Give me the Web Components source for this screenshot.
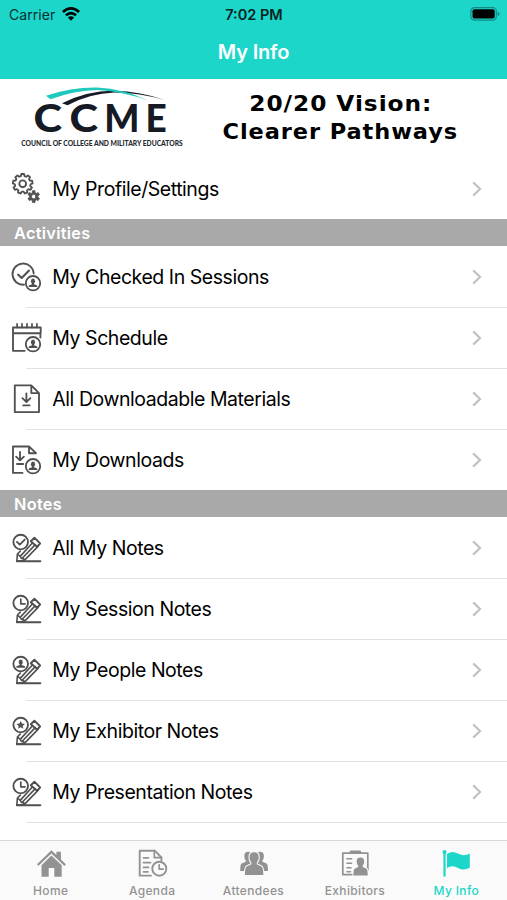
<!DOCTYPE html>
<html lang="en">
<head>
<meta charset="utf-8">
<title>My Info</title>
<style>
  html, body { margin: 0; height: 100%; }
  body {
    background: #fff;
    color: #000;
    font-family: Inter, "Liberation Sans", sans-serif;
    overflow: hidden;
  }
</style>
</head>
<body>
<info-app></info-app>

<script>
const TEAL = '#1cd6ca';

// Outline of a gear with rounded-off teeth
function gearPath(cx, cy, outer, inner, teeth) {
  const step = (Math.PI * 2) / teeth;
  const pts = [];
  for (let i = 0; i < teeth; i++) {
    const a = i * step - Math.PI / 2;
    [[-0.33, inner], [-0.2, outer], [0.2, outer], [0.33, inner]].forEach(([k, r]) => {
      pts.push(`${(cx + r * Math.cos(a + k * step)).toFixed(2)} ${(cy + r * Math.sin(a + k * step)).toFixed(2)}`);
    });
  }
  return `M${pts.join('L')}Z`;
}

// Small circled person, bottom right corner of several icons
const BADGE = `
  <circle cx="21" cy="21.2" r="7.2"/>
  <g fill="currentColor" stroke="none">
    <ellipse cx="21" cy="19.2" rx="2.1" ry="2.6"/>
    <path d="M20 20.5h2v1.7l2.8 1q.6.3.6 1.8h-8.8q0-1.5.6-1.8l2.8-1z"/>
  </g>`;

// Ring and pencil shared by all of the note icons
const PENCIL = `
  <circle cx="8.7" cy="9" r="7.3"/>
  <path d="M4.8 28.2H28.4"/>
  <path d="M4.8 28.2L5.4 21L8.2 23.4L9.3 25.2L11.6 25.6L12.6 27.4L4.8 28.2M5.4 21L8.3 18.1M8.2 23.4L20.6 9.8M12.4 27.4L26 13.4M10.2 25.2L23.3 11.6" stroke-width="1.6"/>
  <path d="M18.8 8.2L22.4 4.7L28.1 10.5L25 13.8Z" stroke-width="1.9"/>`;

const ICONS = {
  settings: `
    <path d="${gearPath(10.7, 9.8, 9.9, 7.9, 9)}"/>
    <circle cx="10.7" cy="9.8" r="3.4"/>
    <path fill="currentColor" fill-rule="evenodd" stroke-width=".8"
          d="${gearPath(21.7, 22.6, 6, 4.2, 6)}M24 22.6a2.3 2.3 0 1 0-4.6 0a2.3 2.3 0 1 0 4.6 0Z"/>`,
  checked: `
    <path d="M12 22.7A10.6 10.6 0 1 1 21.7 11.5"/>
    <path d="M6.2 12.7l3.5 3.3 7.3-7.4" stroke-width="2.1"/>${BADGE}`,
  schedule: `
    <path d="M1 4.5H28.7V10.2H1ZM1 10.2V27.8H12.7M28.4 10V14.5"/>
    <path d="M5.1 .8V4.5M10 .8V4.5M15 .8V4.5M20 .8V4.5M24.9 .8V4.5" stroke-width="1.7"/>${BADGE}`,
  download: `
    <path d="M2.8 1.4H19.3L27 9.1V28.1H2.8ZM19.3 1.4V9.1H27"/>
    <path d="M14.4 9.3V17.6M10.4 14.2l4 3.8 4-3.8M11.2 21.4h6.4"/>`,
  downloads: `
    <path d="M10.5 27.9H1V1.5H17L24 8.2H17V1.5"/>
    <path d="M8 6.8V15M4.1 11.7l3.9 3.7 3.9-3.7M5 19h6.2"/>${BADGE}`,
  noteCheck: `${PENCIL}<path d="M4.9 8.9l2.9 2.8 4.9-5.1"/>`,
  noteClock: `${PENCIL}<path d="M8.8 5.2V9.8H13" stroke-width="1.7"/>`,
  notePerson: `${PENCIL}
    <g fill="currentColor" stroke="none">
      <ellipse cx="8.7" cy="7" rx="2.1" ry="2.6"/>
      <path d="M7.7 8.5h2v1.6l2.8 1q.6.3.6 1.7H4.3q0-1.4.6-1.7l2.8-1z"/>
    </g>`,
  noteStar: `${PENCIL}
    <path d="M8.7 4.9l1.3 2.7 3 .3-2.3 2 .7 2.9-2.7-1.5L6 12.8l.7-2.9-2.3-2 3-.3z" fill="currentColor" stroke="none"/>`,

  home: `
    <g fill="currentColor" stroke="none">
      <path d="M1 15.2L15.4 1.2l5 4.8V2.8h4.5v7.7l5 4.8-1.5 1.6L15.4 4.4 2.5 16.8z"/>
      <path d="M5.5 16.2l9.9-9.6 10.3 9.6v11.6h-7.4v-8.7h-5.6v8.7H5.5z"/>
    </g>`,
  agenda: `
    <path d="M14 26.6H2.7V1.7H17.8L24.4 8.5V11.3" stroke-width="1.9"/>
    <path d="M17.3 1.7V8.6H24.4M6.5 8.8h5M6.5 13.7h7M6.5 18.4h5M6.5 22.8h4.5" stroke-width="1.7"/>
    <circle cx="22.3" cy="19.7" r="7" stroke-width="1.9"/>
    <path d="M22.2 15.8v4.3h4" stroke-width="1.7"/>`,
  attendees: `
    <g fill="currentColor" stroke="none">
      <path d="M9.3 2.8q4 0 4 4.4 0 2.5-1.6 4.2v1.5l4 2V22H1.2q0-6.8 1.4-7.5l4.2-1.8v-1.3Q5.3 9.7 5.3 7.2q0-4.4 4-4.4z"/>
      <path d="M20.9 2.8q4 0 4 4.4 0 2.5-1.5 4.2v1.3l4.2 1.8q1.4.7 1.4 7.5H14.5v-7.1l4-2v-1.5q-1.6-1.7-1.6-4.2 0-4.4 4-4.4z"/>
    </g>
    <path d="M15.1 3.2q4.6 0 4.6 5.2 0 3-1.9 5v1.9l4.6 2.2q1.9.8 1.9 8.6H5.9q0-7.8 1.9-8.6l4.6-2.2v-1.9q-1.9-2-1.9-5 0-5.2 4.6-5.2z"
          fill="currentColor" stroke="#fafafa" stroke-width="2.2" paint-order="stroke"/>`,
  exhibitors: `
    <path d="M13.5 25.7H2.8V4.1H27.8V21" stroke-width="1.7"/>
    <path d="M11 3h8.8" stroke-width="3"/>
    <path d="M7 9.8h4.6M7 14.3h4.6M7 18.7h4M7 22.8h3.4" stroke-width="1.6"/>
    <path d="M20.4 8.4q3.8 0 3.8 4.2 0 2.3-1.5 3.9v1.6l3.8 1.6q1.2.7 1.2 6.8H13.4q0-6.1 1.2-6.8l3.6-1.6v-1.6q-1.6-1.6-1.6-3.9 0-4.2 3.8-4.2z" fill="currentColor" stroke="#fafafa" stroke-width="2" paint-order="stroke"/>`,
  flag: `
    <g fill="currentColor" stroke="none">
      <circle cx="3.5" cy="3" r="2"/>
      <rect x="2.4" y="3" width="2.2" height="24.8" rx="1"/>
      <path d="M6 5Q11 1.2 17 4.5T28.8 4.4V18.8Q22.5 22 17 18.9T6 19z"/>
    </g>`
};

class GlyphIcon extends HTMLElement {
  connectedCallback() {
    this.attachShadow({ mode: 'open' }).innerHTML = `
      <style>
        :host { display: block; width: 30px; height: 30px; flex: none; }
        svg { display: block; overflow: visible; }
      </style>
      <svg width="30" height="30" viewBox="0 0 30 30" fill="none" stroke="currentColor"
           stroke-width="1.85" stroke-linejoin="round" stroke-linecap="round">${ICONS[this.getAttribute('name')]}</svg>
    `;
  }
}

class StatusBar extends HTMLElement {
  connectedCallback() {
    this.attachShadow({ mode: 'open' }).innerHTML = `
      <style>
        :host {
          display: grid; grid-template-columns: 1fr auto 1fr; align-items: center;
          height: 28px; padding: 0 7px 0 9px; box-sizing: border-box;
          font-size: 14px; color: #03302d;
        }
        .left { display: flex; align-items: center; gap: 7px; }
        .carrier { letter-spacing: .05px; }
        .time { font-weight: 600; font-size: 14.5px; letter-spacing: 0; margin-left: -1px; color: #05221f; }
        .battery { justify-self: end; }
        svg { display: block; }
      </style>
      <div class="left">
        <span class="carrier">Carrier</span>
        <svg width="18" height="14" viewBox="0 0 18 14" fill="none" stroke="#000" stroke-width="2.6">
          <path d="M.9 5Q9-2.2 17.1 5"/>
          <path d="M3.9 8.3Q9 3.9 14.1 8.3"/>
          <path d="M9 13.7L5.9 10.6Q9 8 12.1 10.6Z" fill="#000" stroke="none"/>
        </svg>
      </div>
      <span class="time">7:02 PM</span>
      <svg class="battery" width="30" height="14" viewBox="0 0 30 14">
        <rect x=".9" y=".7" width="25.4" height="12.4" rx="3.6" fill="none" stroke="#128a82" stroke-width="1.2"/>
        <rect x="2.5" y="2.3" width="22.2" height="9.2" rx="2" fill="#000"/>
        <path d="M27.7 4.7q2 .7 2 2.2t-2 2.2z" fill="#128a82"/>
      </svg>
    `;
  }
}

class NavHeader extends HTMLElement {
  connectedCallback() {
    this.attachShadow({ mode: 'open' }).innerHTML = `
      <style>
        :host { display: block; height: 79px; background: ${TEAL}; flex: none; }
        h1 {
          margin: 0; height: 49px; line-height: 49px; text-align: center;
          font-size: 20px; font-weight: 600; letter-spacing: -.2px; color: #fff;
        }
      </style>
      <status-bar></status-bar>
      <h1><slot></slot></h1>
    `;
  }
}

class EventBanner extends HTMLElement {
  connectedCallback() {
    this.attachShadow({ mode: 'open' }).innerHTML = `
      <style>
        :host { display: block; height: 79px; flex: none; background: #fff; }
        svg { display: block; }
        .mark { font: 900 37px Lato, sans-serif; fill: #151a24; }
        .tag { font: 900 6.9px Lato, sans-serif; fill: #252932; }
        .title { font: bold 22px "DejaVu Sans", sans-serif; letter-spacing: .9px; fill: #000; }
      </style>
      <svg width="507" height="79" viewBox="0 79 507 79">
        <path d="M62 103.2Q88 90.5 114 90.8Q141 91.5 164.5 100Q140 93 114 92.6Q90 93.5 67.5 105.3Z" fill="#151a24"/>
        <path d="M46 95.8Q72 87.2 97 87.6Q124 89 148.5 100.8Q124 91.5 98 90Q74 90.5 50.5 99.2Z" fill="#1fc9bd"/>
        <text class="mark" y="131.7"><tspan x="33.5" textLength="28.5" lengthAdjust="spacingAndGlyphs">C</tspan><tspan x="69.5" textLength="28.5" lengthAdjust="spacingAndGlyphs">C</tspan><tspan x="104.2">M</tspan><tspan x="145.6">E</tspan></text>
        <text class="tag" x="21.3" y="145.6" textLength="161.5" lengthAdjust="spacingAndGlyphs">COUNCIL OF COLLEGE AND MILITARY EDUCATORS</text>
        <text class="title" x="249.3" y="111.2" textLength="183" lengthAdjust="spacingAndGlyphs">20/20 Vision:</text>
        <text class="title" x="222.6" y="139" textLength="235.5" lengthAdjust="spacingAndGlyphs">Clearer Pathways</text>
      </svg>
    `;
  }
}

class SectionHeader extends HTMLElement {
  connectedCallback() {
    this.attachShadow({ mode: 'open' }).innerHTML = `
      <style>
        :host {
          display: flex; align-items: center; height: 27px; padding-left: 14px; flex: none;
          background: #a9a9a9; color: #fff; font-size: 16.3px; font-weight: 600; letter-spacing: .3px;
        }
      </style>
      <slot></slot>
    `;
  }
}

class MenuRow extends HTMLElement {
  connectedCallback() {
    this.attachShadow({ mode: 'open' }).innerHTML = `
      <style>
        :host {
          display: flex; align-items: center; position: relative; flex: none;
          height: 61.1px; padding: 0 25px 0 12px; box-sizing: border-box;
        }
        :host(:not([last]))::after {
          content: ""; position: absolute; left: 26px; right: 0; bottom: -.5px; height: 1px; background: #e2e2e2;
        }
        glyph-icon { color: #505050; }
        .label { flex: 1; margin-left: 10.3px; font-size: 19.5px; letter-spacing: -.45px; white-space: nowrap; }
        svg { display: block; }
      </style>
      <glyph-icon name="${this.getAttribute('icon')}"></glyph-icon>
      <span class="label"><slot></slot></span>
      <svg width="10" height="16" viewBox="0 0 10 16" fill="none" stroke="#c2c2c4" stroke-width="2.2">
        <path d="M1.2 1.4L8 8L1.2 14.6"/>
      </svg>
    `;
  }
}

class TabItem extends HTMLElement {
  connectedCallback() {
    this.attachShadow({ mode: 'open' }).innerHTML = `
      <style>
        :host {
          display: flex; flex-direction: column; align-items: center; flex: 1 1 0;
          padding-top: 8px; color: #929292;
        }
        :host([active]) { color: ${TEAL}; }
        span { margin-top: 4px; font-size: 12px; line-height: 16px; font-weight: 500; letter-spacing: .35px; }
      </style>
      <glyph-icon name="${this.getAttribute('icon')}"></glyph-icon>
      <span><slot></slot></span>
    `;
  }
}

class TabBar extends HTMLElement {
  connectedCallback() {
    this.attachShadow({ mode: 'open' }).innerHTML = `
      <style>
        :host {
          display: flex; height: 60px; margin-top: auto; flex: none; box-sizing: border-box;
          background: #fafafa; border-top: 1px solid #d9d9d9;
        }
      </style>
      <slot></slot>
    `;
  }
}

class InfoApp extends HTMLElement {
  connectedCallback() {
    this.attachShadow({ mode: 'open' }).innerHTML = `
      <style>
        :host { display: flex; flex-direction: column; width: 507px; height: 900px; background: #fff; }
      </style>
      <nav-header>My Info</nav-header>
      <event-banner></event-banner>
      <menu-row icon="settings" last>My Profile/Settings</menu-row>
      <section-header>Activities</section-header>
      <menu-row icon="checked">My Checked In Sessions</menu-row>
      <menu-row icon="schedule">My Schedule</menu-row>
      <menu-row icon="download">All Downloadable Materials</menu-row>
      <menu-row icon="downloads" last>My Downloads</menu-row>
      <section-header>Notes</section-header>
      <menu-row icon="noteCheck">All My Notes</menu-row>
      <menu-row icon="noteClock">My Session Notes</menu-row>
      <menu-row icon="notePerson">My People Notes</menu-row>
      <menu-row icon="noteStar">My Exhibitor Notes</menu-row>
      <menu-row icon="noteClock">My Presentation Notes</menu-row>
      <tab-bar>
        <tab-item icon="home">Home</tab-item>
        <tab-item icon="agenda">Agenda</tab-item>
        <tab-item icon="attendees">Attendees</tab-item>
        <tab-item icon="exhibitors">Exhibitors</tab-item>
        <tab-item icon="flag" active>My Info</tab-item>
      </tab-bar>
    `;
  }
}

customElements.define('glyph-icon', GlyphIcon);
customElements.define('status-bar', StatusBar);
customElements.define('nav-header', NavHeader);
customElements.define('event-banner', EventBanner);
customElements.define('section-header', SectionHeader);
customElements.define('menu-row', MenuRow);
customElements.define('tab-item', TabItem);
customElements.define('tab-bar', TabBar);
customElements.define('info-app', InfoApp);
</script>
</body>
</html>
